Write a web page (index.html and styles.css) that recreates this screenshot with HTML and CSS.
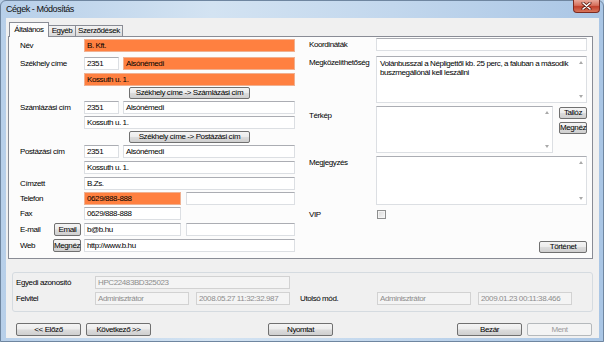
FILE: index.html
```html
<!DOCTYPE html>
<html lang="hu">
<head>
  <meta charset="UTF-8">
  <meta name="viewport" content="width=device-width, initial-scale=1.0">
  <title>Cégek - Módosítás</title>
  <link rel="stylesheet" href="styles.css">
</head>
<body>
  <div class="window">
    <div class="titlebar">
      <span class="title">Cégek - Módosítás</span>
      <button class="close" title="Bezárás">
        <svg width="11" height="8" viewBox="0 0 11 8">
          <path d="M2 1 L9 7 M9 1 L2 7" stroke="#5a1a12" stroke-width="3" stroke-linecap="round"/>
          <path d="M2 1 L9 7 M9 1 L2 7" stroke="#fff" stroke-width="1.6" stroke-linecap="round"/>
        </svg>
      </button>
    </div>

    <div class="client">
      <div class="tabs">
        <span class="tab active">Általános</span>
        <span class="tab t-egyeb">Egyéb</span>
        <span class="tab t-szerz">Szerződések</span>
      </div>

      <div class="panel">
        <!-- bal oldali oszlop -->
        <div class="col left">
          <div class="row">
            <span class="lbl">Név</span>
            <span class="field hl full">B. Kft.</span>
          </div>
          <div class="row sp3">
            <span class="lbl">Székhely címe</span>
            <span class="field zip">2351</span>
            <span class="field hl city">Alsónémedi</span>
          </div>
          <div class="row sp">
            <span class="lbl"></span>
            <span class="field hl full">Kossuth u. 1.</span>
          </div>
          <div class="row btnrow up1">
            <span class="lbl"></span>
            <div class="center"><button class="btn wide">Székhely címe -&gt; Számlázási cím</button></div>
          </div>
          <div class="row">
            <span class="lbl">Számlázási cím</span>
            <span class="field zip">2351</span>
            <span class="field city">Alsónémedi</span>
          </div>
          <div class="row">
            <span class="lbl"></span>
            <span class="field full">Kossuth u. 1.</span>
          </div>
          <div class="row btnrow">
            <span class="lbl"></span>
            <div class="center"><button class="btn wide">Székhely címe -&gt; Postázási cím</button></div>
          </div>
          <div class="row">
            <span class="lbl">Postázási cím</span>
            <span class="field zip">2351</span>
            <span class="field city">Alsónémedi</span>
          </div>
          <div class="row sp">
            <span class="lbl"></span>
            <span class="field full">Kossuth u. 1.</span>
          </div>
          <div class="row sp">
            <span class="lbl">Címzett</span>
            <span class="field full">B.Zs.</span>
          </div>
          <div class="row">
            <span class="lbl">Telefon</span>
            <span class="field hl phone">0629/888-888</span>
            <span class="field phone2"></span>
          </div>
          <div class="row">
            <span class="lbl">Fax</span>
            <span class="field phone">0629/888-888</span>
          </div>
          <div class="row sp">
            <span class="lbl split">E-mail <button class="btn small">Email</button></span>
            <span class="field phone">b@b.hu</span>
            <span class="field phone2"></span>
          </div>
          <div class="row sp">
            <span class="lbl split">Web <button class="btn small m">Megnéz</button></span>
            <span class="field full">http://www.b.hu</span>
          </div>
        </div>

        <!-- jobb oldali oszlop -->
        <div class="col right">
          <div class="row">
            <span class="lbl r">Koordináták</span>
            <span class="field full"></span>
          </div>
          <div class="row area-row h47 sp3">
            <span class="lbl r">Megközelíthetőség</span>
            <div class="area full">
              <div class="area-text">Volánbusszal a Népligettől kb. 25 perc, a faluban a második<br>buszmegállónál kell leszállni</div>
              <div class="sb"><i class="arr-up"></i><i class="arr-down"></i></div>
            </div>
          </div>
          <div class="row area-row h47 sp">
            <span class="lbl r pt2">Térkép</span>
            <div class="area map">
              <div class="area-text"></div>
              <div class="sb"><i class="arr-up"></i><i class="arr-down"></i></div>
            </div>
            <div class="side-btns">
              <button class="btn side">Tallóz</button>
              <button class="btn side">Megnéz</button>
            </div>
          </div>
          <div class="row area-row h49 sp">
            <span class="lbl r">Megjegyzés</span>
            <div class="area full">
              <div class="area-text"></div>
              <div class="sb"><i class="arr-up"></i><i class="arr-down"></i></div>
            </div>
          </div>
          <div class="row vip">
            <span class="lbl r">VIP</span>
            <span class="check"></span>
          </div>
          <div class="row hist">
            <button class="btn tort">Történet</button>
          </div>
        </div>
      </div>

      <div class="group">
        <div class="grow">
          <span class="glbl">Egyedi azonosító</span>
          <span class="field dis id">HPC22483BD325023</span>
        </div>
        <div class="grow">
          <span class="glbl">Felvitel</span>
          <span class="field dis half">Adminisztrátor</span>
          <span class="field dis half">2008.05.27 11:32:32.987</span>
          <span class="glbl mod">Utolsó mód.</span>
          <span class="field dis half">Adminisztrátor</span>
          <span class="field dis half">2009.01.23 00:11:38.466</span>
        </div>
      </div>

      <div class="actions">
        <div class="pair">
          <button class="btn big">&lt;&lt; Előző</button>
          <button class="btn big">Következő &gt;&gt;</button>
        </div>
        <button class="btn big print">Nyomtat</button>
        <div class="pair">
          <button class="btn big">Bezár</button>
          <button class="btn big" disabled>Ment</button>
        </div>
      </div>
    </div>
  </div>
</body>
</html>
```

FILE: styles.css
```css
* {
  box-sizing: border-box;
}

body {
  margin: 0;
  font-family: 'Liberation Sans', Arial, sans-serif;
  font-size: 8px;
  letter-spacing: -0.4px;
  color: #000;
  background-color: #b9d0e8;
  overflow: hidden;
}

.window {
  width: 604px;
  height: 342px;
  display: flex;
  flex-direction: column;
  padding: 0 4px 3px 5px;
  border: 1px solid #6f86a0;
  border-radius: 6px 6px 0 0;
  background: linear-gradient(to right, #b7cfe9, #d3e3f2 35%, #c2d7ed 65%, #aac6e5);
}

.titlebar {
  height: 17px;
  display: flex;
  align-items: flex-start;
}

.title {
  padding-top: 3px;
  font-size: 9px;
  letter-spacing: -0.45px;
  line-height: 11px;
  color: #111;
}

.close {
  margin-left: auto;
  margin-top: -1px;
  margin-right: -1px;
  width: 27px;
  height: 13px;
  padding: 0;
  display: flex;
  align-items: center;
  justify-content: center;
  border: 1px solid #7d2a1f;
  border-top: none;
  border-radius: 0 0 4px 4px;
  background: linear-gradient(to bottom, #e9a99b, #d6705c 45%, #c2402c 55%, #d8765c);
}

.client {
  flex: 1;
  display: flex;
  flex-direction: column;
  padding: 4px 6px 2px 2px;
  background-color: #f0f0f0;
}

/* fülek */
.tabs {
  height: 14px;
  display: flex;
  align-items: flex-end;
  padding-left: 1px;
}

.tab {
  height: 11px;
  line-height: 10px;
  text-align: center;
  border: 1px solid #898c95;
  border-bottom: none;
  border-left: none;
  background: linear-gradient(to bottom, #f3f3f3, #e6e6e6 50%, #d9d9d9);
}

.tab.active {
  width: 40px;
  height: 15px;
  line-height: 14px;
  margin-bottom: -1px;
  border-left: 1px solid #898c95;
  background: #fcfcfc;
  position: relative;
  z-index: 1;
}

.t-egyeb { width: 27px; }
.t-szerz { width: 47px; }

.panel {
  height: 223px;
  display: grid;
  grid-template-columns: 276px 278px;
  column-gap: 14px;
  padding: 2px 5px 0 10px;
  border: 1px solid #898c95;
  background-color: #fcfcfc;
}

.col {
  display: flex;
  flex-direction: column;
  gap: 2px;
}

.col.right {
  margin-top: -1px;
}

.row {
  height: 13px;
  display: flex;
  align-items: center;
  line-height: 11px;
}

.row.sp { margin-top: 1px; }
.row.sp3 { margin-top: 3px; }
.row.up1 { margin-top: -1px; }
.row.btnrow { height: 12px; }

.lbl {
  width: 65px;
  flex-shrink: 0;
  padding-left: 1px;
}

.lbl.r {
  width: 67px;
  padding-left: 0;
}

.lbl.split {
  display: flex;
  align-items: center;
  justify-content: space-between;
  padding-right: 3px;
}

.field {
  height: 13px;
  padding-left: 2px;
  border: 1px solid #dcdfe3;
  border-top-color: #abadb3;
  background-color: #fff;
  white-space: nowrap;
  overflow: hidden;
}

.field.hl {
  background-color: #ff8040;
  border-color: #f0b090;
}

.full { width: 211px; }
.zip { width: 35px; margin-right: 4px; }
.city { width: 172px; }
.phone { width: 97px; margin-right: 5px; }
.phone2 { width: 109px; }

.center {
  width: 211px;
  display: flex;
  justify-content: center;
}

/* gombok */
.btn {
  padding: 0;
  font-family: inherit;
  font-size: 8px;
  letter-spacing: -0.4px;
  color: #000;
  border: 1px solid #707070;
  border-radius: 2px;
  background: linear-gradient(to bottom, #f4f4f4, #ececec 48%, #dcdcdc 52%, #cfcfcf);
  cursor: pointer;
}

.btn:disabled {
  color: #9a9a9a;
  border-color: #b5b9bc;
  background: #f4f4f4;
}

.btn.wide { width: 121px; height: 12px; line-height: 10px; }
.btn.small { width: 27px; height: 13px; line-height: 11px; }
.btn.small.m { width: 28px; }
.btn.side { width: 28px; height: 12px; line-height: 10px; }
.btn.tort { width: 48px; height: 12px; line-height: 10px; }
.btn.big { width: 65px; height: 13px; line-height: 11px; }

/* szövegdobozok */
.area-row {
  align-items: flex-start;
}

.area-row .lbl {
  padding-top: 1px;
}

.area-row .lbl.pt2 {
  padding-top: 4px;
}

.h47 { height: 47px; }
.h49 { height: 49px; }

.area {
  height: 100%;
  display: flex;
  border: 1px solid #dcdfe3;
  border-top-color: #abadb3;
  background-color: #fff;
}

.area.map { width: 177px; }

.area-text {
  flex: 1;
  padding: 2px 0 0 3px;
  line-height: 9px;
}

.sb {
  width: 11px;
  display: flex;
  flex-direction: column;
  justify-content: space-between;
  align-items: center;
  padding: 4px 0;
}

.arr-up,
.arr-down {
  width: 0;
  height: 0;
  border-left: 2.5px solid transparent;
  border-right: 2.5px solid transparent;
}

.arr-up { border-bottom: 3px solid #a9a9a9; }
.arr-down { border-top: 3px solid #a9a9a9; }

.side-btns {
  margin-left: 6px;
  padding-top: 1px;
  display: flex;
  flex-direction: column;
  gap: 3px;
}

.row.vip {
  margin-top: 2px;
  height: 11px;
}

.check {
  width: 9px;
  height: 9px;
  margin-left: 1px;
  border: 1px solid #8e8f8f;
  background: linear-gradient(135deg, #d9d9d9, #f7f7f7);
  box-shadow: inset 0 0 0 1px #f4f4f4;
}

.row.hist {
  margin-top: 18px;
  justify-content: flex-end;
}

/* alsó csoport */
.group {
  height: 40px;
  margin: 13px 0 0 4px;
  padding: 3px 3px 0;
  display: flex;
  flex-direction: column;
  gap: 3px;
  border: 1px solid #d5dbe0;
  border-radius: 3px;
}

.grow {
  height: 13px;
  display: flex;
  align-items: center;
  line-height: 11px;
}

.glbl {
  width: 79px;
  flex-shrink: 0;
}

.glbl.mod {
  width: 77px;
  margin-left: 10px;
}

.field.dis {
  color: #8d8d8d;
  background-color: #f4f4f4;
  border-color: #d2d2d2;
}

.id { width: 195px; }
.half { width: 94px; }
.half + .half { margin-left: 7px; }

.actions {
  margin-top: 11px;
  padding-left: 8px;
  padding-right: 1px;
  display: flex;
  justify-content: space-between;
}

.pair {
  display: flex;
  gap: 5px;
}

.print {
  margin-right: 7px;
}
```
